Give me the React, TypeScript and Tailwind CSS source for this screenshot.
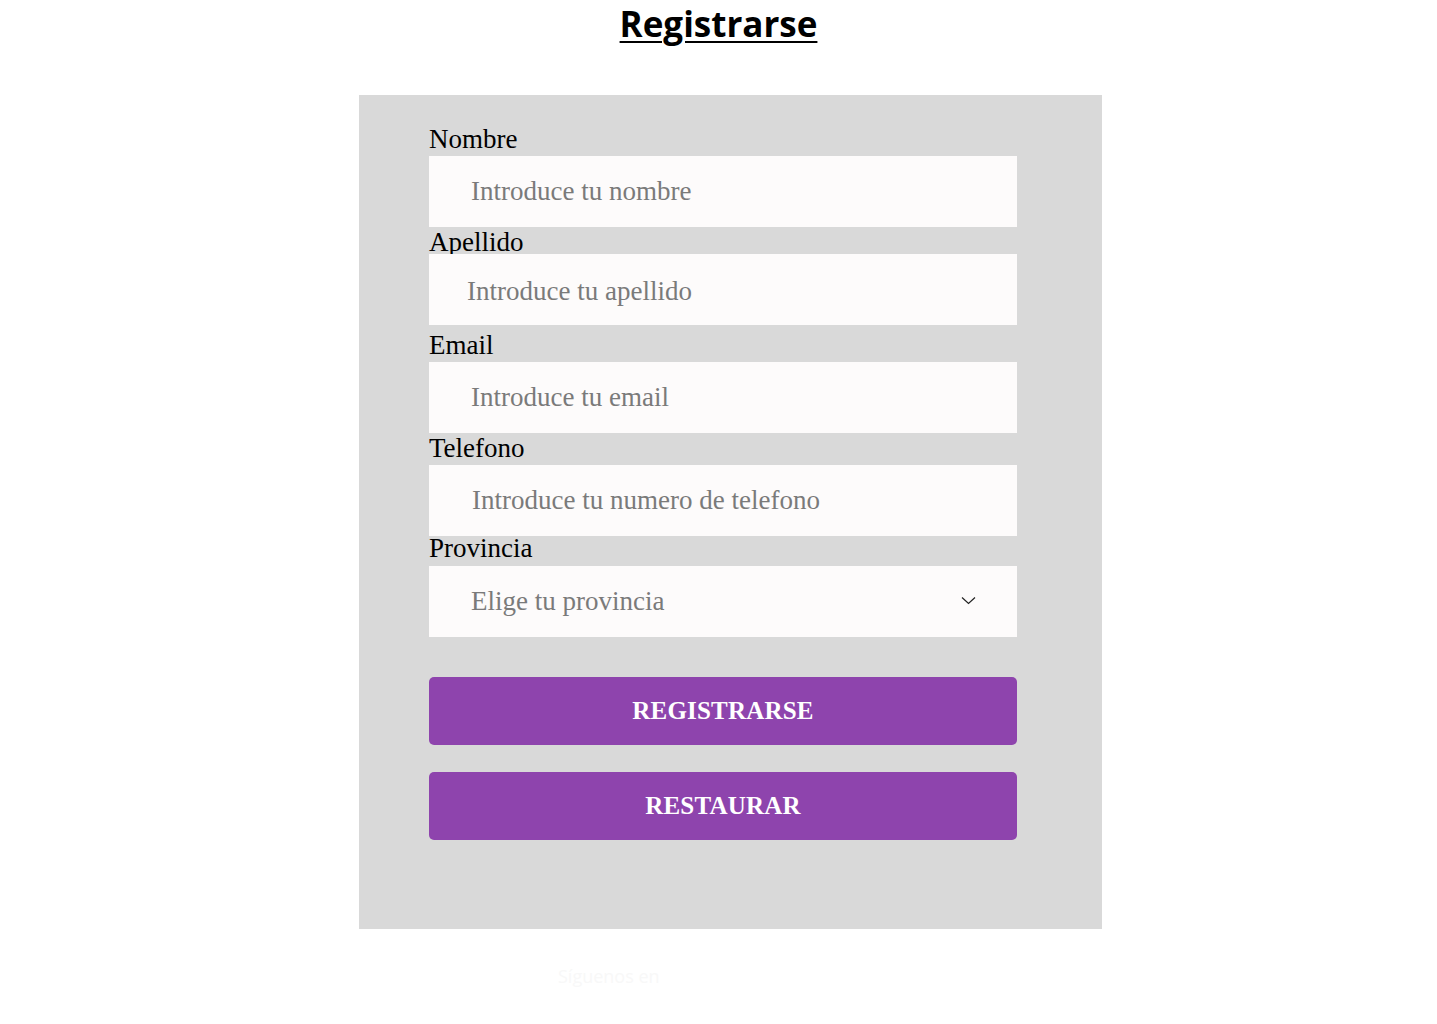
import React from "react";

const serif = "font-['Liberation_Serif','Times_New_Roman',serif]";

const fieldBase =
  "block w-[588px] h-[71px] bg-[#fdfbfb] text-[27px] outline-none border-0 " + serif;

const inputClass = fieldBase + " text-[#333] placeholder:text-[#7a7a7a]";

const App = () => {
  return (
    <div className="min-h-[1024px] bg-white">
      <h1 className="text-center font-['Open_Sans',sans-serif] font-bold text-[35px] leading-[48px] underline underline-offset-[4px] decoration-2 text-black">
        Registrarse
      </h1>

      <form
        className={"ml-[359px] mt-[47px] w-[743px] h-[834px] bg-[#d9d9d9] pl-[70px] pt-[29px] " + serif}
        onSubmit={(e) => e.preventDefault()}
      >
        {/* nombre */}
        <label className="block text-[27px] leading-[30px] text-black">Nombre</label>
        <input className={inputClass + " mt-[2px] pl-[42px]"} type="text" placeholder="Introduce tu nombre" />

        {/* apellido */}
        <label className="block text-[27px] leading-[30px] text-black">Apellido</label>
        <input className={inputClass + " mt-[-3px] pl-[38px] pt-[3px] relative"} type="text" placeholder="Introduce tu apellido" />

        {/* email */}
        <label className="block text-[27px] leading-[30px] text-black mt-[5px]">Email</label>
        <input className={inputClass + " mt-[2px] pl-[42px]"} type="email" placeholder="Introduce tu email" />

        {/* telefono */}
        <label className="block text-[27px] leading-[30px] text-black">Telefono</label>
        <input className={inputClass + " mt-[2px] pl-[43px]"} type="tel" placeholder="Introduce tu numero de telefono" />

        {/* provincia */}
        <label className="block text-[27px] leading-[30px] text-black mt-[-3px]">Provincia</label>
        <div className="relative mt-[3px] w-[588px]">
          <select
            defaultValue=""
            className={fieldBase + " appearance-none pl-[42px] text-[#7a7a7a] cursor-pointer"}
          >
            <option value="" disabled>
              Elige tu provincia
            </option>
            <option>Madrid</option>
            <option>Barcelona</option>
            <option>Valencia</option>
            <option>Sevilla</option>
          </select>
          <svg
            className="absolute left-[532px] top-[30px] pointer-events-none"
            width="15"
            height="9"
            viewBox="0 0 15 9"
            fill="none"
          >
            <polyline points="1,1.5 7.5,7.5 14,1.5" stroke="#222" strokeWidth="1.2" />
          </svg>
        </div>

        <button
          type="submit"
          className="block w-[588px] h-[68px] mt-[40px] rounded-[5px] bg-[#8e44ad] text-white text-[25px] font-bold tracking-[0.2px]"
        >
          REGISTRARSE
        </button>
        <button
          type="reset"
          className="block w-[588px] h-[68px] mt-[27px] rounded-[5px] bg-[#8e44ad] text-white text-[25px] font-bold tracking-[0.2px]"
        >
          RESTAURAR
        </button>
      </form>

      <p className="ml-[558px] mt-[34px] text-[18px] font-['Open_Sans',sans-serif] text-[#f8f8f8]">Síguenos en</p>
    </div>
  );
};

export default App;
